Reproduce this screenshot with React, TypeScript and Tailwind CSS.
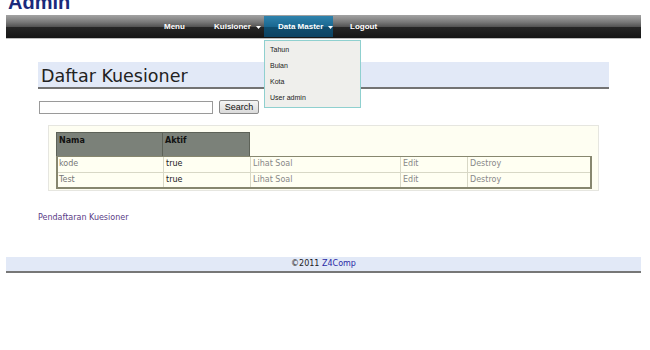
const rows = [
  { nama: 'kode', aktif: 'true' },
  { nama: 'Test', aktif: 'true' },
];

const menuItems = ['Tahun', 'Bulan', 'Kota', 'User admin'];

function Caret() {
  return (
    <svg width="5" height="3" viewBox="0 0 5 3" className="ml-[5px] mt-[2px] shrink-0">
      <path d="M0 0h5L2.5 3z" fill="#ffffff" />
    </svg>
  );
}

export default function App() {
  return (
    <div className="relative w-[650px] h-[350px] overflow-hidden bg-white font-['DejaVu_Sans',sans-serif]">
      {/* site title, scrolled partly out of view */}
      <div className="h-[15px] pl-[8px] flex">
        <div className="-mt-[8px] text-[20px] leading-[20px] font-bold text-[#1b2a7b] font-['Liberation_Sans',Arial,sans-serif]">
          Admin
        </div>
      </div>

      {/* nav bar */}
      <nav className="ml-[6px] w-[635px] h-[23px] flex whitespace-nowrap bg-[linear-gradient(to_bottom,#a3a3a3,#7a7a7a_30%,#555555_50%,#262626_53%,#151515)] shadow-[0_1px_0_#bdbdbd] font-['Liberation_Sans',Arial,sans-serif] text-[8px] font-bold text-white">
        <div className="ml-[144px] w-[50px] pl-[14px] flex items-center">Menu</div>
        <div className="w-[64px] pl-[14px] flex items-center">
          Kuisioner
          <Caret />
        </div>
        <div className="relative w-[69px] my-[1px] pl-[14px] flex items-center bg-[linear-gradient(to_bottom,#2f83ad,#1a6790_50%,#0f4d6e_53%,#0c4262)]">
          Data Master
          <Caret />
          <div className="absolute left-0 top-full mt-[3px] w-[97px] border border-[#8fd0cf] bg-[#efefec] py-[1px] font-normal text-[7px] text-[#222222]">
            {menuItems.map((m) => (
              <div key={m} className="h-[16px] pl-[5px] flex items-center text-[#222222]">
                {m}
              </div>
            ))}
          </div>
        </div>
        <div className="ml-[3px] pl-[14px] flex items-center">Logout</div>
      </nav>

      <main className="pl-[38px]">
        <div className="mt-[24px] w-[571px] h-[27px] bg-[#e2e9f7] border-b-2 border-[#737373] pl-[3px] pt-[3px] text-[17.5px] leading-[22px] text-[#222222]">
          Daftar Kuesioner
        </div>

        <div className="mt-[11px] flex items-center">
          <input className="ml-[1px] w-[174px] h-[13px] border border-[#9a9a9a] bg-white" />
          <button className="ml-[6px] w-[40px] h-[14px] rounded-[2px] border border-[#8a8a8a] bg-[linear-gradient(to_bottom,#f5f5f5,#dadada)] text-[9px] leading-[12px] text-[#111111] font-['Liberation_Sans',Arial,sans-serif]">
            Search
          </button>
        </div>

        <div className="mt-[11px] ml-[10px] w-[551px] h-[66px] border border-[#e6e6e0] bg-[#fefef2] pt-[6px] pl-[7px] text-[8px]">
          <div className="flex h-[24px]">
            <div className="w-[107px] bg-[#7b8179] border border-[#5d6258] border-b-0 pl-[2px] pt-[2px] font-bold text-[#111111]">
              Nama
            </div>
            <div className="w-[87px] bg-[#7b8179] border border-[#5d6258] border-l-0 border-b-0 pl-[2px] pt-[2px] font-bold text-[#111111]">
              Aktif
            </div>
          </div>
          <div className="w-[536px] border-2 border-t border-[#87876f] bg-[#fffff2]">
            {rows.map((r, i) => (
              <div
                key={r.nama}
                className={`flex h-[15px] leading-[14px] ${i > 0 ? 'border-t border-[#d8d8c6]' : ''}`}
              >
                <div className="w-[105px] pl-[1px] text-[#777777]">{r.nama}</div>
                <div className="w-[87px] pl-[2px] border-l border-[#d8d8c6] text-[#222222]">{r.aktif}</div>
                <div className="w-[150px] pl-[2px] border-l border-[#d8d8c6] text-[#888888]">Lihat Soal</div>
                <div className="w-[67px] pl-[2px] border-l border-[#d8d8c6] text-[#888888]">Edit</div>
                <div className="flex-1 pl-[2px] border-l border-[#d8d8c6] text-[#888888]">Destroy</div>
              </div>
            ))}
          </div>
        </div>

        <div className="mt-[22px] text-[8px] leading-[10px] text-[#5a3c86]">Pendaftaran Kuesioner</div>
      </main>

      <footer className="mt-[34px] ml-[6px] w-[635px] h-[16px] bg-[#e2e9f7] border-b-2 border-[#777777] text-center text-[8px] leading-[14px] text-[#222222]">
        ©2011 <span className="text-[#2b2ba6]">Z4Comp</span>
      </footer>
    </div>
  );
}
